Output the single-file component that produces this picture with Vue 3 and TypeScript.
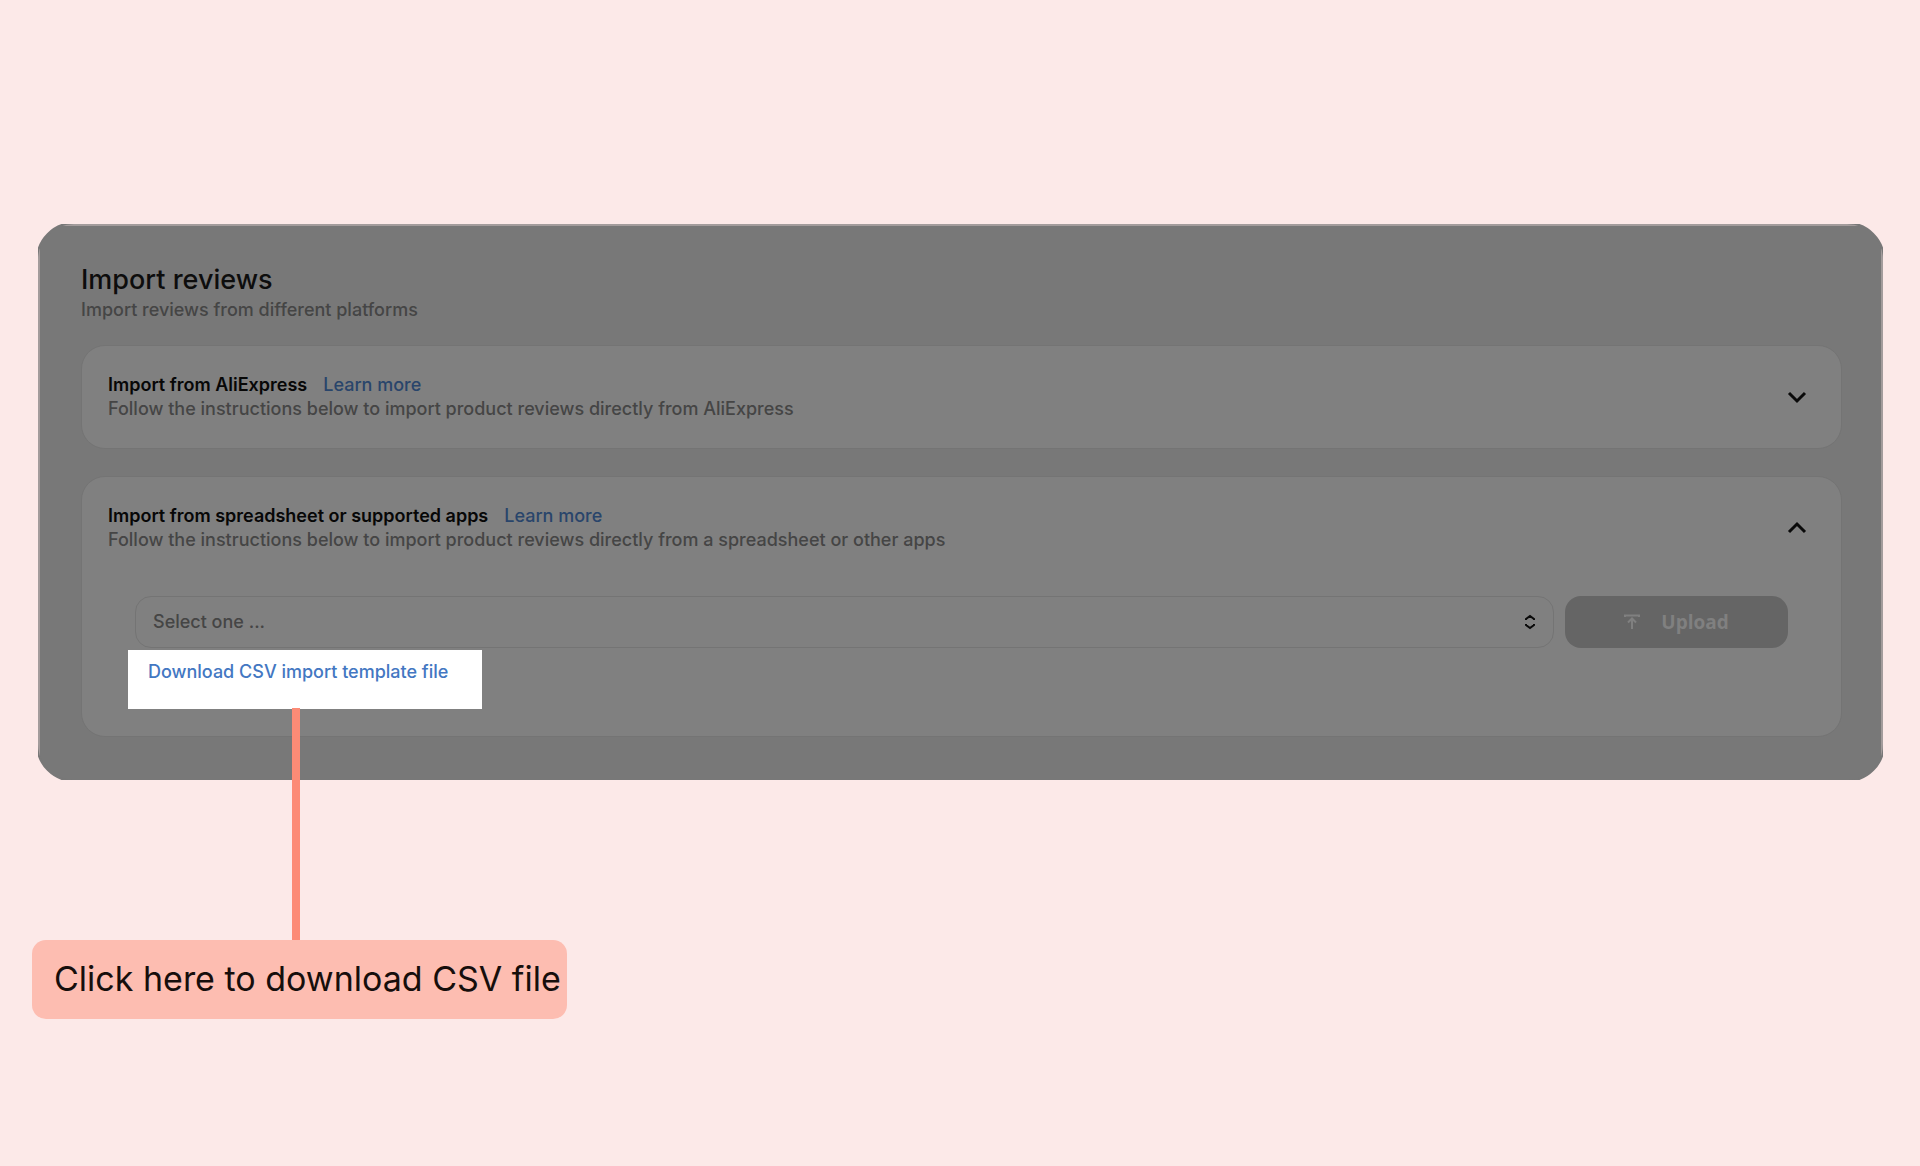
<script setup lang="ts">
import { ref } from 'vue'

const source = ref('')
</script>

<template>
  <main class="page">
    <section class="panel">
      <header class="panel-head">
        <h1>Import reviews</h1>
        <p>Import reviews from different platforms</p>
      </header>

      <article class="card">
        <div class="card-head">
          <div>
            <div class="card-title">
              <h2>Import from AliExpress</h2>
              <a href="#aliexpress">Learn more</a>
            </div>
            <p>Follow the instructions below to import product reviews directly from AliExpress</p>
          </div>
          <button class="toggle" type="button" aria-label="Expand AliExpress import" aria-expanded="false">
            <svg width="20" height="20" viewBox="0 0 20 20"><path d="M2 6 L10 14 L18 6" /></svg>
          </button>
        </div>
      </article>

      <article class="card">
        <div class="card-head">
          <div>
            <div class="card-title">
              <h2>Import from spreadsheet or supported apps</h2>
              <a href="#spreadsheet">Learn more</a>
            </div>
            <p>Follow the instructions below to import product reviews directly from a spreadsheet or other apps</p>
          </div>
          <button class="toggle" type="button" aria-label="Collapse spreadsheet import" aria-expanded="true">
            <svg width="20" height="20" viewBox="0 0 20 20"><path d="M2 14 L10 6 L18 14" /></svg>
          </button>
        </div>

        <form class="upload" @submit.prevent>
          <div class="select">
            <select v-model="source" aria-label="Import source">
              <option value="">Select one ...</option>
            </select>
            <svg class="sorter" width="12" height="16" viewBox="0 0 12 16">
              <path d="M2 6 V5 L6 2 L10 5 V6 M2 10 V11 L6 14 L10 11 V10" />
            </svg>
          </div>
          <button class="submit" type="submit" disabled>
            <svg width="16" height="16" viewBox="0 0 16 16"><path d="M1 3 V1.5 H15 V3 M8 15 V5 M4 8.5 L8 4.5 L12 8.5" /></svg>
            <span>Upload</span>
          </button>
        </form>

        <div class="highlight">
          <a href="#template">Download CSV import template file</a>
        </div>
      </article>
    </section>

    <aside class="callout">Click here to download CSV file</aside>
  </main>
</template>

<style>
body {
  margin: 0;
  background: #fce9e8;
}
</style>

<style scoped>
.page {
  box-sizing: border-box;
  min-height: 100vh;
  padding: 222px 35px 100px 36px;
  font-family: Inter, "Liberation Sans", sans-serif;
  font-size: 18px;
  font-weight: 450;
  line-height: 24px;
}

h1,
h2,
p {
  margin: 0;
}

a {
  color: #29456b;
  font-weight: 500;
  text-decoration: none;
}

/* The outer 2px are clipped away, so the rounded corners meet the edges at an angle. */
.panel {
  display: flex;
  flex-direction: column;
  gap: 27px;
  padding: 40px 41px 43px 43px;
  border: 2px solid #787878;
  border-radius: 38px;
  clip-path: inset(2px);
  color: #454545;
  background:
    linear-gradient(#a39c9c, #a39c9c) top / 100% 2px no-repeat,
    linear-gradient(#a39c9c, #a39c9c) left / 2px 100% no-repeat,
    linear-gradient(#a39c9c, #a39c9c) right / 2px 100% no-repeat,
    #787878;
}

.panel-head {
  margin-bottom: -6px;
}

h1 {
  color: #0d0d0d;
  font-size: 27px;
  font-weight: 500;
  line-height: 32px;
}

.panel-head p {
  line-height: 28px;
}

.card {
  padding: 27px 34px 27px 26px;
  border: 1px solid #747474;
  border-radius: 24px;
  background: #808080;
}

.card-head {
  display: flex;
  align-items: center;
  justify-content: space-between;
}

.card-title {
  display: flex;
  gap: 16px;
}

h2 {
  color: #070707;
  font-size: 18px;
  font-weight: 600;
  line-height: 24px;
}

.toggle {
  display: flex;
  padding: 0;
  border: 0;
  background: none;
}

svg {
  fill: none;
  stroke: #0a0a0a;
  stroke-width: 2;
}

.toggle svg {
  stroke-width: 3;
}

.upload {
  display: flex;
  gap: 11px;
  margin: 44px 19px 0 27px;
}

.select {
  position: relative;
  flex: 1;
}

select {
  box-sizing: border-box;
  width: 100%;
  height: 52px;
  padding: 0 17px;
  border: 1px solid #747474;
  border-radius: 16px;
  appearance: none;
  color: #454545;
  background: #808080;
  font: inherit;
}

.sorter {
  position: absolute;
  top: 18px;
  right: 18px;
  pointer-events: none;
}

.submit {
  display: flex;
  align-items: center;
  justify-content: center;
  gap: 21px;
  width: 223px;
  border: 0;
  border-radius: 16px;
  color: #808080;
  background: #656565;
  font: 700 19px/24px "Open Sans", "Noto Sans", sans-serif;
}

.submit svg {
  stroke: #808080;
}

.highlight {
  box-sizing: border-box;
  width: 354px;
  height: 59px;
  margin: 2px 0 0 20px;
  padding: 10px 20px;
  background: #fff;
  white-space: nowrap;
}

.highlight a {
  color: #4377c2;
}

.callout {
  position: relative;
  box-sizing: border-box;
  width: 535px;
  margin: 158px 0 0 -4px;
  padding: 15px 0 16px 22px;
  border-radius: 14px;
  color: #160e0c;
  background: #fdbdb1;
  font-size: 34px;
  font-weight: 400;
  line-height: 48px;
  white-space: nowrap;
}

.callout::before {
  content: "";
  position: absolute;
  bottom: 100%;
  left: 260px;
  width: 8px;
  height: 232px;
  background: #fc8b76;
}
</style>
